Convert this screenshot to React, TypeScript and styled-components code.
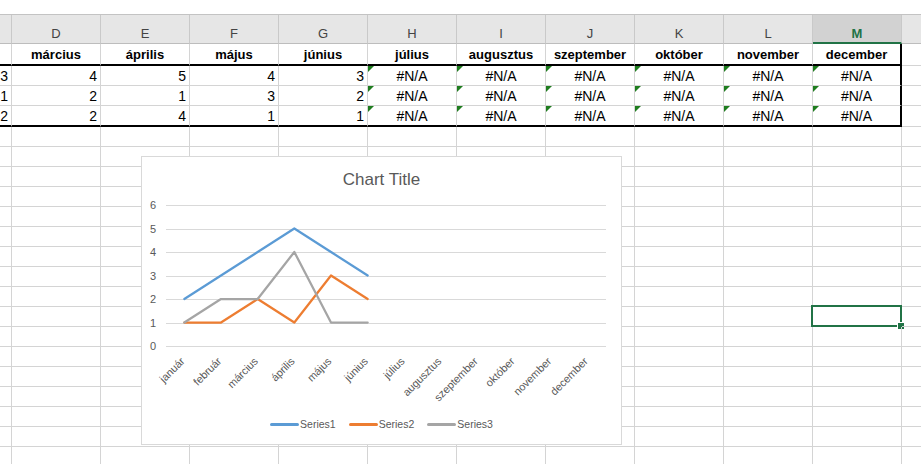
import styled, { createGlobalStyle, css } from "styled-components";

type Series = {
  name: string;
  color: string;
  values: number[];
};

type Align = "left" | "center" | "right";

const MONTHS = [
  "január",
  "február",
  "március",
  "április",
  "május",
  "június",
  "július",
  "augusztus",
  "szeptember",
  "október",
  "november",
  "december",
];

const SERIES: Series[] = [
  { name: "Series1", color: "#5b9bd5", values: [2, 3, 4, 5, 4, 3] },
  { name: "Series2", color: "#ed7d31", values: [1, 1, 2, 1, 3, 2] },
  { name: "Series3", color: "#a5a5a5", values: [1, 2, 2, 4, 1, 1] },
];

// visible columns: C (cut off), D..M, N (cut off)
const COLUMN_LETTERS = ["", "D", "E", "F", "G", "H", "I", "J", "K", "L", "M", ""];
const FIRST_MONTH = 1; // column C holds február
const ACTIVE_COL = 10;
const LAST_COL = COLUMN_LETTERS.length - 1;
const EMPTY_ROWS = 17;
const SELECTED_ROW = 9;

// chart geometry (px inside the plot svg)
const PLOT_LEFT = 24;
const PLOT_RIGHT = 464;
const ZERO_Y = 153;
const UNIT = 23.5;
const CAT_W = (PLOT_RIGHT - PLOT_LEFT) / MONTHS.length;

const catX = (i: number) => PLOT_LEFT + CAT_W * (i + 0.5);
const valY = (v: number) => ZERO_Y - UNIT * v;

const GlobalStyle = createGlobalStyle`
  body {
    margin: 0;
    background: #fff;
    font-family: "Liberation Sans", Arial, sans-serif;
    overflow: hidden;
  }
`;

const cellText = (series: Series, col: number) => {
  if (col === LAST_COL) return "";
  const month = FIRST_MONTH + col;
  if (month < series.values.length) return String(series.values[month]);
  return "#N/A";
};

const App = () => {
  return (
    <>
      <GlobalStyle />
      <StyledSheet>
        <StyledTopStrip />
        <StyledGrid>
          {COLUMN_LETTERS.map((letter, c) => (
            <StyledColHeader key={`h${c}`} $active={c === ACTIVE_COL} $last={c === LAST_COL}>
              {letter}
            </StyledColHeader>
          ))}

          {COLUMN_LETTERS.map((_, c) => (
            <StyledCell
              key={`m${c}`}
              $align="center"
              $bold
              $last={c === LAST_COL}
              $thickBottom={c !== LAST_COL}
              $thickRight={c === ACTIVE_COL}
            >
              {c > 0 && c < LAST_COL ? MONTHS[FIRST_MONTH + c] : ""}
            </StyledCell>
          ))}

          {SERIES.map((s, r) =>
            COLUMN_LETTERS.map((_, c) => {
              const text = cellText(s, c);
              const isErr = text === "#N/A";
              return (
                <StyledCell
                  key={`d${r}-${c}`}
                  $align={isErr ? "center" : "right"}
                  $last={c === LAST_COL}
                  $thickBottom={r === SERIES.length - 1 && c !== LAST_COL}
                  $thickRight={c === ACTIVE_COL}
                  $err={isErr}
                >
                  {text}
                </StyledCell>
              );
            })
          )}

          {Array.from({ length: EMPTY_ROWS }).map((_, r) =>
            COLUMN_LETTERS.map((__, c) => (
              <StyledCell key={`e${r}-${c}`} $align="left" $last={c === LAST_COL}>
                {r === SELECTED_ROW && c === ACTIVE_COL && (
                  <StyledSelection>
                    <StyledFillHandle />
                  </StyledSelection>
                )}
              </StyledCell>
            ))
          )}
        </StyledGrid>

        <LineChart />
      </StyledSheet>
    </>
  );
};

const LineChart = () => {
  const gridValues = [0, 1, 2, 3, 4, 5, 6];

  return (
    <StyledChart>
      <StyledChartTitle>Chart Title</StyledChartTitle>
      <svg width={479} height={218} style={{ display: "block" }}>
        {gridValues.map((v) => (
          <line
            key={`g${v}`}
            x1={PLOT_LEFT}
            x2={PLOT_RIGHT}
            y1={Math.round(valY(v)) + 0.5}
            y2={Math.round(valY(v)) + 0.5}
            stroke="#d9d9d9"
            strokeWidth={1}
          />
        ))}
        {gridValues.map((v) => (
          <text
            key={`y${v}`}
            x={14}
            y={valY(v) + 4}
            textAnchor="end"
            fontSize={11}
            fill="#595959"
            fontFamily="Liberation Sans, Arial, sans-serif"
          >
            {v}
          </text>
        ))}
        {MONTHS.map((m, i) => {
          const x = catX(i) + 1;
          const y = 169;
          return (
            <text
              key={m}
              x={x}
              y={y}
              textAnchor="end"
              fontSize={10.8}
              fill="#595959"
              fontFamily="Liberation Sans, Arial, sans-serif"
              transform={`rotate(-45 ${x} ${y})`}
            >
              {m}
            </text>
          );
        })}
        {SERIES.map((s) => (
          <polyline
            key={s.name}
            points={s.values.map((v, i) => `${catX(i)},${valY(v)}`).join(" ")}
            fill="none"
            stroke={s.color}
            strokeWidth={2.25}
            strokeLinejoin="round"
            strokeLinecap="round"
          />
        ))}
      </svg>
      <StyledLegend>
        {SERIES.map((s) => (
          <StyledLegendItem key={s.name}>
            <StyledLegendSwatch $color={s.color} />
            {s.name}
          </StyledLegendItem>
        ))}
      </StyledLegend>
    </StyledChart>
  );
};

const StyledSheet = styled.div`
  position: relative;
  width: 921px;
  height: 464px;
  overflow: hidden;
  background: #fff;
`;

const StyledTopStrip = styled.div`
  height: 15px;
  box-sizing: border-box;
  border-bottom: 1px solid #c3c3c3;
  background: #fff;
`;

const StyledGrid = styled.div`
  display: grid;
  grid-template-columns: 12px repeat(10, 89px) 19px;
  grid-template-rows: 29px 22px 20px 20px 21px repeat(${EMPTY_ROWS}, 20px);
`;

const StyledColHeader = styled.div<{ $active?: boolean; $last?: boolean }>`
  box-sizing: border-box;
  display: flex;
  align-items: flex-end;
  justify-content: center;
  line-height: 14px;
  padding-bottom: 2px;
  font-size: 13px;
  background: #e6e6e6;
  color: #444;
  border-right: ${({ $last }) => ($last ? "none" : "1px solid #c9c9c9")};
  border-bottom: 1px solid #bdbdbd;
  ${({ $active }) =>
    $active &&
    css`
      background: #d2d2d2;
      color: #217346;
      font-weight: 700;
      border-bottom: 2px solid #217346;
      padding-bottom: 1px;
    `}
`;

const StyledCell = styled.div<{
  $align: Align;
  $bold?: boolean;
  $last?: boolean;
  $thickBottom?: boolean;
  $thickRight?: boolean;
  $err?: boolean;
}>`
  position: relative;
  box-sizing: border-box;
  display: flex;
  align-items: center;
  justify-content: ${({ $align }) =>
    $align === "right" ? "flex-end" : $align === "center" ? "center" : "flex-start"};
  padding: 0 3px;
  white-space: nowrap;
  color: #000;
  font-size: ${({ $bold }) => ($bold ? "13px" : "14px")};
  font-weight: ${({ $bold }) => ($bold ? 700 : 400)};
  border-right: ${({ $last, $thickRight }) =>
    $last ? "none" : $thickRight ? "2px solid #000" : "1px solid #d4d4d4"};
  border-bottom: ${({ $thickBottom }) => ($thickBottom ? "2px solid #000" : "1px solid #d4d4d4")};
  ${({ $err }) =>
    $err &&
    css`
      &::before {
        content: "";
        position: absolute;
        top: 0;
        left: 0;
        border-top: 6px solid #1f7d1f;
        border-right: 6px solid transparent;
      }
    `}
`;

const StyledSelection = styled.span`
  position: absolute;
  top: -2px;
  left: -2px;
  right: -1px;
  bottom: -1px;
  border: 2px solid #217346;
  pointer-events: none;
`;

const StyledFillHandle = styled.span`
  position: absolute;
  right: -5px;
  bottom: -5px;
  width: 6px;
  height: 6px;
  background: #217346;
  border: 1px solid #fff;
`;

const StyledChart = styled.div`
  position: absolute;
  left: 141px;
  top: 156px;
  width: 481px;
  height: 289px;
  box-sizing: border-box;
  border: 1px solid #d9d9d9;
  background: #fff;
  display: flex;
  flex-direction: column;
  font-family: "Liberation Sans", Arial, sans-serif;
  color: #595959;
`;

const StyledChartTitle = styled.div`
  padding-top: 10px;
  line-height: 26px;
  font-size: 17px;
  text-align: center;
  color: #595959;
`;

const StyledLegend = styled.div`
  height: 26px;
  display: flex;
  align-items: center;
  justify-content: center;
  gap: 13px;
`;

const StyledLegendItem = styled.div`
  display: flex;
  align-items: center;
  font-size: 10.5px;
  color: #595959;
`;

const StyledLegendSwatch = styled.span<{ $color: string }>`
  display: inline-block;
  width: 29px;
  height: 3px;
  border-radius: 2px;
  margin-right: 1px;
  background: ${({ $color }) => $color};
`;

export default App;
